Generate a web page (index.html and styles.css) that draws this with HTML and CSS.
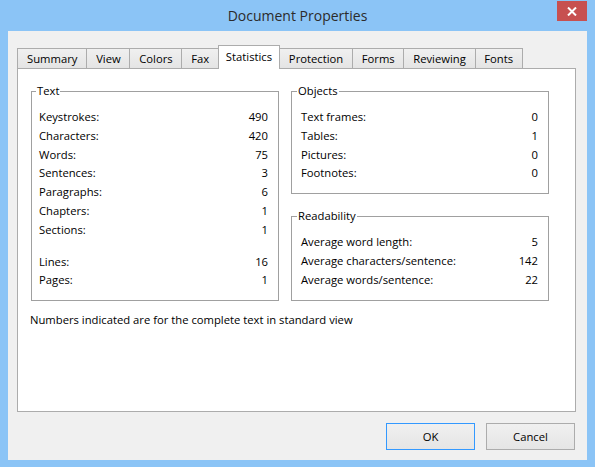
FILE: index.html
```html
<!DOCTYPE html>
<html lang="en">
<head>
  <meta charset="UTF-8" />
  <title>Document Properties</title>
  <link rel="stylesheet" href="styles.css">
</head>
<body>
  <div class="window">
    <div class="titlebar">
      <span></span>
      <div class="title">Document Properties</div>
      <button class="close" aria-label="Close">
        <svg width="10" height="9" viewBox="0 0 10 9"><path d="M1 0.5 L9 8.5 M9 0.5 L1 8.5" stroke="#fff" stroke-width="2"/></svg>
      </button>
    </div>

    <div class="client">
      <div class="tabs">
        <div class="tab">Summary</div>
        <div class="tab">View</div>
        <div class="tab">Colors</div>
        <div class="tab">Fax</div>
        <div class="tab active">Statistics</div>
        <div class="tab">Protection</div>
        <div class="tab">Forms</div>
        <div class="tab">Reviewing</div>
        <div class="tab">Fonts</div>
      </div>

      <div class="panel">
        <div class="groups">
          <fieldset class="group group-text">
            <legend>Text</legend>
            <div class="row"><span>Keystrokes:</span><span>490</span></div>
            <div class="row"><span>Characters:</span><span>420</span></div>
            <div class="row"><span>Words:</span><span>75</span></div>
            <div class="row"><span>Sentences:</span><span>3</span></div>
            <div class="row"><span>Paragraphs:</span><span>6</span></div>
            <div class="row"><span>Chapters:</span><span>1</span></div>
            <div class="row"><span>Sections:</span><span>1</span></div>
            <div class="row row-gap"><span>Lines:</span><span>16</span></div>
            <div class="row"><span>Pages:</span><span>1</span></div>
          </fieldset>

          <div class="col">
            <fieldset class="group">
              <legend>Objects</legend>
              <div class="row"><span>Text frames:</span><span>0</span></div>
              <div class="row"><span>Tables:</span><span>1</span></div>
              <div class="row"><span>Pictures:</span><span>0</span></div>
              <div class="row"><span>Footnotes:</span><span>0</span></div>
            </fieldset>
            <fieldset class="group">
              <legend>Readability</legend>
              <div class="row"><span>Average word length:</span><span>5</span></div>
              <div class="row"><span>Average characters/sentence:</span><span>142</span></div>
              <div class="row"><span>Average words/sentence:</span><span>22</span></div>
            </fieldset>
          </div>
        </div>
        <p class="note">Numbers indicated are for the complete text in standard view</p>
      </div>

      <div class="buttons">
        <button class="btn btn-default">OK</button>
        <button class="btn">Cancel</button>
      </div>
    </div>
  </div>
</body>
</html>
```

FILE: styles.css
```css
body {
  margin: 0;
  font-family: "Open Sans", "Noto Sans", sans-serif;
  font-size: 11.25px;
  color: #000;
}
.window {
  width: 595px;
  height: 467px;
  background: #8bc4f6;
  display: flex;
  flex-direction: column;
}
.titlebar {
  height: 31px;
  display: grid;
  grid-template-columns: 1fr auto 1fr;
}
.title {
  font-size: 14px;
  line-height: 32px;
  color: #2b2b2b;
}
.close {
  justify-self: end;
  align-self: start;
  width: 30px;
  height: 20px;
  margin: 1px 8px 0 0;
  padding: 0;
  border: 0;
  background: #c75050;
  display: flex;
  align-items: center;
  justify-content: center;
}
.client {
  flex: 1;
  margin: 0 8px 7px;
  padding: 14px 11px 0 9px;
  background: #f0f0f0;
}
.tabs {
  display: flex;
  align-items: flex-end;
}
.tab {
  height: 20px;
  box-sizing: border-box;
  padding: 0 8.75px;
  margin-left: -1px;
  border: 1px solid #acacac;
  border-bottom: 0;
  background: linear-gradient(#f0f0f0, #e4e4e4);
  line-height: 19px;
}
.tab:first-child {
  margin-left: 0;
  padding: 0 9px;
}
.tab.active {
  height: 24px;
  padding: 0 7px;
  margin-bottom: -1px;
  background: #fff;
  line-height: 22px;
  position: relative;
  z-index: 1;
}
.panel {
  height: 344px;
  box-sizing: border-box;
  border: 1px solid #acacac;
  background: #fff;
  padding: 14px 0 0 13px;
}
.groups {
  display: flex;
  align-items: flex-start;
  gap: 12px;
}
.group {
  margin: 0;
  padding: 9px 10px 10px 7px;
  border: 1px solid #a0a0a0;
  min-width: 0;
  box-sizing: border-box;
}
.group legend {
  padding: 0 1px;
  margin-left: -3px;
  line-height: 16px;
}
.group-text {
  width: 248px;
}
.col {
  width: 258px;
  display: flex;
  flex-direction: column;
  gap: 14px;
}
.col .group {
  padding-left: 9px;
}
.col .group legend {
  margin-left: -4px;
}
.row {
  display: flex;
  justify-content: space-between;
  line-height: 18.8px;
}
.row-gap {
  margin-top: 13px;
}
.note {
  margin: 11px 0 0 -1px;
  line-height: 16px;
}
.buttons {
  display: flex;
  justify-content: flex-end;
  gap: 11px;
  margin: 11px 1px 0 0;
}
.btn {
  width: 89px;
  height: 27px;
  padding: 0;
  font: inherit;
  color: #000;
  border: 1px solid #acacac;
  background: linear-gradient(#f0f0f0, #e5e5e5);
}
.btn-default {
  border-color: #3399ff;
}
```
